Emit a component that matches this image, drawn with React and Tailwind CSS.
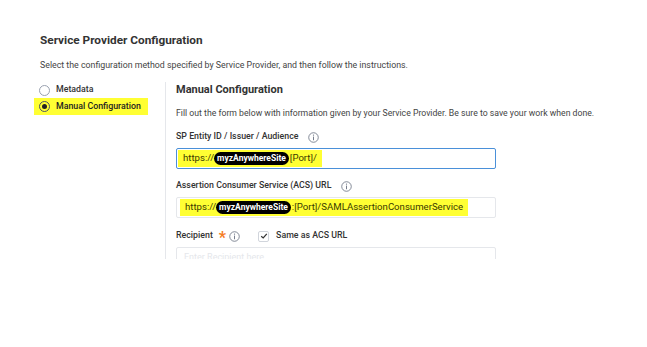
import React from 'react'

const font = { fontFamily: 'Roboto, "Liberation Sans", sans-serif' }

const InfoIcon = () => (
  <svg width="11" height="11" viewBox="0 0 12 12" className="text-gray-500">
    <circle cx="6" cy="6" r="5.2" fill="none" stroke="currentColor" strokeWidth="0.9" />
    <line x1="6" y1="5" x2="6" y2="9" stroke="currentColor" strokeWidth="1" />
    <circle cx="6" cy="3.4" r="0.7" fill="currentColor" />
  </svg>
)

const Redacted = () => (
  <span className="inline-flex items-center px-[3px] h-[13px] rounded-full bg-black text-white font-bold text-[8.5px] leading-none">
    myzAnywhereSite
  </span>
)

const UrlValue = ({ tail }) => (
  <span className="inline-flex items-center h-[17px] bg-[#ffff33] pl-[5px] pr-[5px] text-[9.6px] text-[#3a3a00]">
    https://<Redacted />
    <span className="ml-[1px]">{tail}</span>
  </span>
)

export default function App() {
  return (
    <div className="w-[647px] h-[347px] bg-white overflow-hidden" style={font}>
      <div className="pl-[40px] pt-[33px]">
        <h1 className="text-[11.8px] font-bold text-[#333] leading-[14px]">Service Provider Configuration</h1>
        <p className="mt-[12px] text-[8.8px] text-[#444] leading-[12px]">
          Select the configuration method specified by Service Provider, and then follow the instructions.
        </p>
      </div>

      <div className="flex mt-[11px] pl-[34px]">
        <div className="w-[131px]">
          <div className="flex items-center gap-[6px] pl-[5px] h-[16px]">
            <span className="w-[11px] h-[11px] rounded-full border border-gray-400 bg-white" />
            <span className="text-[8.8px] text-[#333] font-medium">Metadata</span>
          </div>
          <div className="flex items-center gap-[6px] pl-[5px] h-[17px] w-[114px] bg-[#ffff33]">
            <span className="w-[11px] h-[11px] rounded-full border border-gray-600 flex items-center justify-center">
              <span className="w-[5px] h-[5px] rounded-full bg-[#222]" />
            </span>
            <span className="text-[8.8px] text-[#222] font-medium">Manual Configuration</span>
          </div>
        </div>

        <div className="border-l border-gray-200 pl-[10px] h-[177px] overflow-hidden">
          <h2 className="text-[11px] font-bold text-[#333] leading-[14px] mt-[1px]">Manual Configuration</h2>
          <p className="mt-[10px] text-[8.7px] text-[#444] leading-[12px]">
            Fill out the form below with information given by your Service Provider. Be sure to save your work when done.
          </p>

          <div className="mt-[12px] flex items-center gap-[10px] h-[12px]">
            <span className="text-[8.8px] font-medium text-[#333]">SP Entity ID / Issuer / Audience</span>
            <InfoIcon />
          </div>
          <div className="mt-[5px] w-[320px] h-[21px] border border-[#4a90d9] rounded-[2px] flex items-center px-[1px]">
            <UrlValue tail="[Port]/" />
          </div>

          <div className="mt-[11px] flex items-center gap-[10px] h-[12px]">
            <span className="text-[8.8px] font-medium text-[#333]">Assertion Consumer Service (ACS) URL</span>
            <InfoIcon />
          </div>
          <div className="mt-[5px] w-[320px] h-[21px] border border-gray-200 rounded-[2px] flex items-center px-[3px]">
            <UrlValue tail=":[Port]/SAMLAssertionConsumerService" />
          </div>

          <div className="mt-[11px] flex items-center h-[14px]">
            <span className="text-[8.8px] font-medium text-[#333]">Recipient</span>
            <span className="ml-[6px] text-[#f57c1f] text-[16px] font-bold leading-none mt-[4px]">*</span>
            <span className="ml-[3px]"><InfoIcon /></span>
            <span className="ml-[18px] w-[11px] h-[11px] border border-gray-300 rounded-[2px] flex items-center justify-center">
              <svg width="8" height="8" viewBox="0 0 8 8">
                <path d="M1.2 4.2 L3.2 6 L6.8 1.8" fill="none" stroke="#333" strokeWidth="1.2" />
              </svg>
            </span>
            <span className="ml-[7px] text-[8.8px] font-medium text-[#333]">Same as ACS URL</span>
          </div>
          <div className="mt-[4px] w-[320px] h-[22px] border border-gray-200 rounded-[2px] flex items-center px-[7px]">
            <span className="text-[9px] text-gray-200">Enter Recipient here</span>
          </div>
        </div>
      </div>
    </div>
  )
}
